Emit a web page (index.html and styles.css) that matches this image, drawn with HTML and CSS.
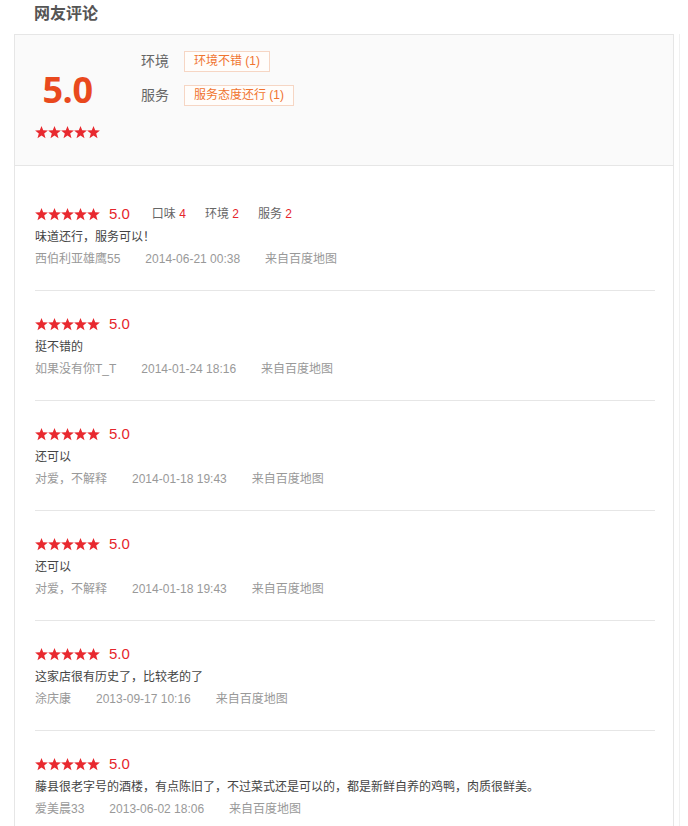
FILE: index.html
```html
<!DOCTYPE html>
<html lang="zh-CN">
<head>
<meta charset="utf-8">
<title>网友评论</title>
<link rel="stylesheet" href="styles.css">
</head>
<body>
<svg width="0" height="0" class="defs" aria-hidden="true">
  <defs>
    <polygon id="star" points="6.5,0 8.2,4.3 12.9,4.5 9.2,7.5 10.5,12.3 6.5,9.6 2.5,12.3 3.8,7.5 0.1,4.5 4.8,4.3"/>
    <g id="stars5">
      <use href="#star" x="0"/>
      <use href="#star" x="13"/>
      <use href="#star" x="26"/>
      <use href="#star" x="39"/>
      <use href="#star" x="52"/>
    </g>
  </defs>
</svg>
<div class="page">
  <h2 class="title">网友评论</h2>
  <div class="wrap">
    <div class="panel">
      <div class="summary">
        <div class="score">
          <div class="score-num">5.0</div>
          <svg class="stars" width="65" height="13" viewBox="0 0 65 13"><use href="#stars5"/></svg>
        </div>
        <div class="tags">
          <div class="tag-row"><span class="tag-label">环境</span><span class="tag">环境不错 (1)</span></div>
          <div class="tag-row"><span class="tag-label">服务</span><span class="tag">服务态度还行 (1)</span></div>
        </div>
      </div>
      <div class="reviews">
        <div class="review">
          <div class="r-head">
            <svg class="stars" width="65" height="13" viewBox="0 0 65 13"><use href="#stars5"/></svg>
            <span class="r-score">5.0</span>
            <span class="aspect">口味 <em>4</em></span>
            <span class="aspect">环境 <em>2</em></span>
            <span class="aspect">服务 <em>2</em></span>
          </div>
          <div class="r-text">味道还行，服务可以！</div>
          <div class="r-meta"><span>西伯利亚雄鹰55</span><span>2014-06-21 00:38</span><span>来自百度地图</span></div>
        </div>
        <div class="review">
          <div class="r-head">
            <svg class="stars" width="65" height="13" viewBox="0 0 65 13"><use href="#stars5"/></svg>
            <span class="r-score">5.0</span>
          </div>
          <div class="r-text">挺不错的</div>
          <div class="r-meta"><span>如果没有你T_T</span><span>2014-01-24 18:16</span><span>来自百度地图</span></div>
        </div>
        <div class="review">
          <div class="r-head">
            <svg class="stars" width="65" height="13" viewBox="0 0 65 13"><use href="#stars5"/></svg>
            <span class="r-score">5.0</span>
          </div>
          <div class="r-text">还可以</div>
          <div class="r-meta"><span>对爱，不解释</span><span>2014-01-18 19:43</span><span>来自百度地图</span></div>
        </div>
        <div class="review">
          <div class="r-head">
            <svg class="stars" width="65" height="13" viewBox="0 0 65 13"><use href="#stars5"/></svg>
            <span class="r-score">5.0</span>
          </div>
          <div class="r-text">还可以</div>
          <div class="r-meta"><span>对爱，不解释</span><span>2014-01-18 19:43</span><span>来自百度地图</span></div>
        </div>
        <div class="review">
          <div class="r-head">
            <svg class="stars" width="65" height="13" viewBox="0 0 65 13"><use href="#stars5"/></svg>
            <span class="r-score">5.0</span>
          </div>
          <div class="r-text">这家店很有历史了，比较老的了</div>
          <div class="r-meta"><span>涂庆康</span><span>2013-09-17 10:16</span><span>来自百度地图</span></div>
        </div>
        <div class="review">
          <div class="r-head">
            <svg class="stars" width="65" height="13" viewBox="0 0 65 13"><use href="#stars5"/></svg>
            <span class="r-score">5.0</span>
          </div>
          <div class="r-text">藤县很老字号的酒楼，有点陈旧了，不过菜式还是可以的，都是新鲜自养的鸡鸭，肉质很鲜美。</div>
          <div class="r-meta"><span>爱美晨33</span><span>2013-06-02 18:06</span><span>来自百度地图</span></div>
        </div>
      </div>
    </div>
  </div>
</div>
</body>
</html>
```

FILE: styles.css
```css
html, body {
  margin: 0;
  padding: 0;
  background: #fff;
}
body {
  font-family: "Liberation Sans", "Noto Sans CJK SC", sans-serif;
  font-size: 12px;
  color: #333;
}
.defs {
  position: absolute;
  width: 0;
  height: 0;
  overflow: hidden;
}
.page {
  width: 688px;
  height: 826px;
  overflow: hidden;
}
.title {
  margin: 0 0 6px 0;
  padding-left: 34px;
  height: 28px;
  line-height: 28px;
  font-size: 16px;
  font-weight: bold;
  color: #555;
}
.wrap {
  display: flex;
  width: 660px;
  padding: 0 5px 0 14px;
  border-right: 1px solid #f0f0f0;
}
.panel {
  width: 660px;
  box-sizing: border-box;
  border: 1px solid #e6e6e6;
  border-bottom: none;
}
.summary {
  display: flex;
  align-items: flex-start;
  height: 131px;
  padding: 16px 0 0 20px;
  box-sizing: border-box;
  background: #fafafa;
  border-bottom: 1px solid #e6e6e6;
}
.score {
  width: 65px;
  display: flex;
  flex-direction: column;
  align-items: center;
  margin-top: 19px;
}
.score-num {
  font-family: "Open Sans", "Liberation Sans", sans-serif;
  font-size: 36px;
  line-height: 40px;
  font-weight: bold;
  color: #e9491d;
  letter-spacing: -0.5px;
}
.score .stars {
  margin-top: 16px;
}
.stars {
  display: block;
  fill: #e8292f;
}
.tags {
  margin-left: 41px;
}
.tag-row {
  display: flex;
  align-items: center;
  height: 21px;
  margin-bottom: 13px;
}
.tag-label {
  font-size: 14px;
  color: #666;
  width: 43px;
  line-height: 21px;
}
.tag {
  height: 21px;
  box-sizing: border-box;
  line-height: 19px;
  padding: 0 9px;
  border: 1px solid #f6d6c4;
  background: #fffdfb;
  color: #f0742f;
  font-size: 12px;
}
.reviews {
  padding: 15px 18px 0 20px;
}
.review {
  padding: 22px 0 20px;
  border-bottom: 1px solid #e6e6e6;
}
.r-head {
  display: flex;
  align-items: center;
  height: 22px;
}
.r-score {
  margin-left: 9px;
  font-size: 15px;
  color: #e5262c;
  line-height: 22px;
}
.aspect {
  margin-left: 22px;
  color: #666;
  line-height: 22px;
}
.aspect + .aspect {
  margin-left: 19px;
}
.aspect em {
  font-style: normal;
  color: #e5262c;
}
.r-text {
  line-height: 22px;
  color: #444;
  margin-top: 1px;
}
.r-meta {
  display: flex;
  line-height: 22px;
  color: #999;
}
.r-meta span {
  margin-right: 25px;
}
```
